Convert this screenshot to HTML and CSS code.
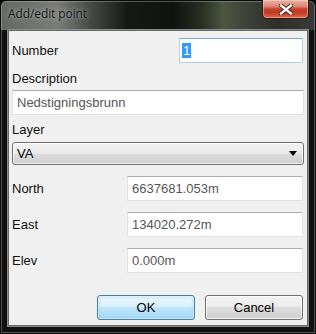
FILE: index.html
```html
<!DOCTYPE html>
<html>
<head>
	<title>Add/edit point</title>
<link rel="stylesheet" href="styles.css">
</head>
<body>

<div class="window">
	<div class="titlebar">
		<span class="title">Add/edit point</span>
		<div class="close">
			<svg width="14" height="11" viewBox="0 0 14 11">
				<path d="M2 1.5 L12 9.5 M12 1.5 L2 9.5" stroke="#3a1a12" stroke-width="4.2" stroke-linecap="square"/>
				<path d="M2 1.5 L12 9.5 M12 1.5 L2 9.5" stroke="#ffffff" stroke-width="2.4" stroke-linecap="square"/>
			</svg>
		</div>
	</div>

	<div class="client">
		<div class="row row-top">
			<span class="label">Number</span>
			<div class="field field-number focused"><span class="selected">1</span></div>
		</div>

		<div class="label label-block">Description</div>
		<div class="field field-wide">Nedstigningsbrunn</div>

		<div class="label label-block label-layer">Layer</div>
		<div class="combo">
			<span>VA</span>
			<svg width="8" height="5" viewBox="0 0 8 5"><path d="M0 0 H8 L4 5 Z" fill="#000"/></svg>
		</div>

		<div class="row row-coord">
			<span class="label">North</span>
			<div class="field field-coord">6637681.053m</div>
		</div>
		<div class="row row-coord">
			<span class="label">East</span>
			<div class="field field-coord">134020.272m</div>
		</div>
		<div class="row row-coord">
			<span class="label">Elev</span>
			<div class="field field-coord">0.000m</div>
		</div>

		<div class="buttons">
			<button class="btn btn-default">OK</button>
			<button class="btn">Cancel</button>
		</div>
	</div>
</div>

</body>
</html>
```

FILE: styles.css
```css
*{box-sizing: border-box;}

body{margin: 0;background: #000;font-family: "Liberation Sans", Arial, sans-serif;}

.window{width: 316px;height: 334px;border-radius: 6px 6px 0 0;border: 1px solid #0c0c0c;box-shadow: inset 0 0 0 1px rgba(200,200,200,0.35);
	background: linear-gradient(to bottom, transparent 0, transparent 29px, #111 29px, #111 100%),
		linear-gradient(to right, #656864 0, #7a7d78 18%, #4a4c48 28%, #171915 40%, #101210 55%, #2a3024 64%, #4c5640 71%, #3e423a 78%, #2e2f2c 88%, #3a3a3a 100%);
	display: flex;flex-direction: column;}

.titlebar{height: 29px;display: flex;justify-content: space-between;align-items: flex-start;padding-left: 7px;}
.title{font-family: "Open Sans", "Noto Sans", sans-serif;font-size: 12px;line-height: 16px;margin-top: 5px;color: #111;text-shadow: 0 0 6px rgba(230,230,230,0.55), 0 0 2px rgba(230,230,230,0.4);letter-spacing: -0.1px;}

.close{width: 47px;height: 19px;margin-top: -1px;margin-right: 6px;border: 1px solid #3b1710;border-top: none;border-radius: 0 0 5px 5px;
	background: linear-gradient(to bottom, #e9b2a4 0, #dc8a76 35%, #c4442c 50%, #c23a22 70%, #e0684a 100%);
	box-shadow: inset 0 0 0 1px rgba(255,220,210,0.45);display: flex;align-items: center;justify-content: center;}

.client{margin: 0 7px;height: 296px;background: #f0f0f0;border: 1px solid #6a6a6a;box-shadow: 0 0 0 1px #8a8a8a;padding: 7px 4px 0 3px;font-size: 13px;color: #000;}

.label{font-size: 13px;line-height: 16px;color: #111;}
.label-block{margin-top: 8px;height: 16px;}
.label-layer{margin-top: 7px;}

.row{display: flex;justify-content: space-between;align-items: center;}

.field{height: 25px;background: #fff;border: 1px solid #e2e3ea;border-top-color: #abadb3;padding: 3px 4px;font-size: 13px;line-height: 17px;color: #555;white-space: nowrap;}
.field-number{width: 124px;padding-left: 2px;}
.focused{border-color: #b5cfe7;border-top-color: #7fa9d2;}
.selected{background: #3399ff;color: #fff;padding: 0 1px;}
.field-wide{margin-top: 3px;width: 292px;}
.field-coord{width: 176px;}

.combo{margin-top: 4px;height: 23px;width: 292px;border: 1px solid #707070;border-radius: 3px;
	background: linear-gradient(to bottom, #f2f2f2 0, #ebebeb 50%, #dddddd 50%, #cfcfcf 100%);
	box-shadow: inset 0 0 0 1px rgba(255,255,255,0.7);display: flex;justify-content: space-between;align-items: center;padding: 0 6px 0 4px;}

.row-coord{margin-top: 11px;}

.buttons{display: flex;justify-content: flex-end;gap: 10px;margin-top: 22px;}
.btn{width: 98px;height: 25px;font-family: "Liberation Sans", Arial, sans-serif;font-size: 13px;color: #000;border: 1px solid #707070;border-radius: 3px;padding: 0;
	background: linear-gradient(to bottom, #f2f2f2 0, #ebebeb 50%, #dddddd 50%, #cfcfcf 100%);box-shadow: inset 0 0 0 1px rgba(255,255,255,0.75);}
.btn-default{border-color: #3c7fb1;background: linear-gradient(to bottom, #eaf6fd 0, #d9f0fc 50%, #bee6fd 50%, #a7d9f5 100%);box-shadow: inset 0 0 0 1px rgba(255,255,255,0.6), inset 0 0 2px 1px rgba(90,170,220,0.5);}
```
